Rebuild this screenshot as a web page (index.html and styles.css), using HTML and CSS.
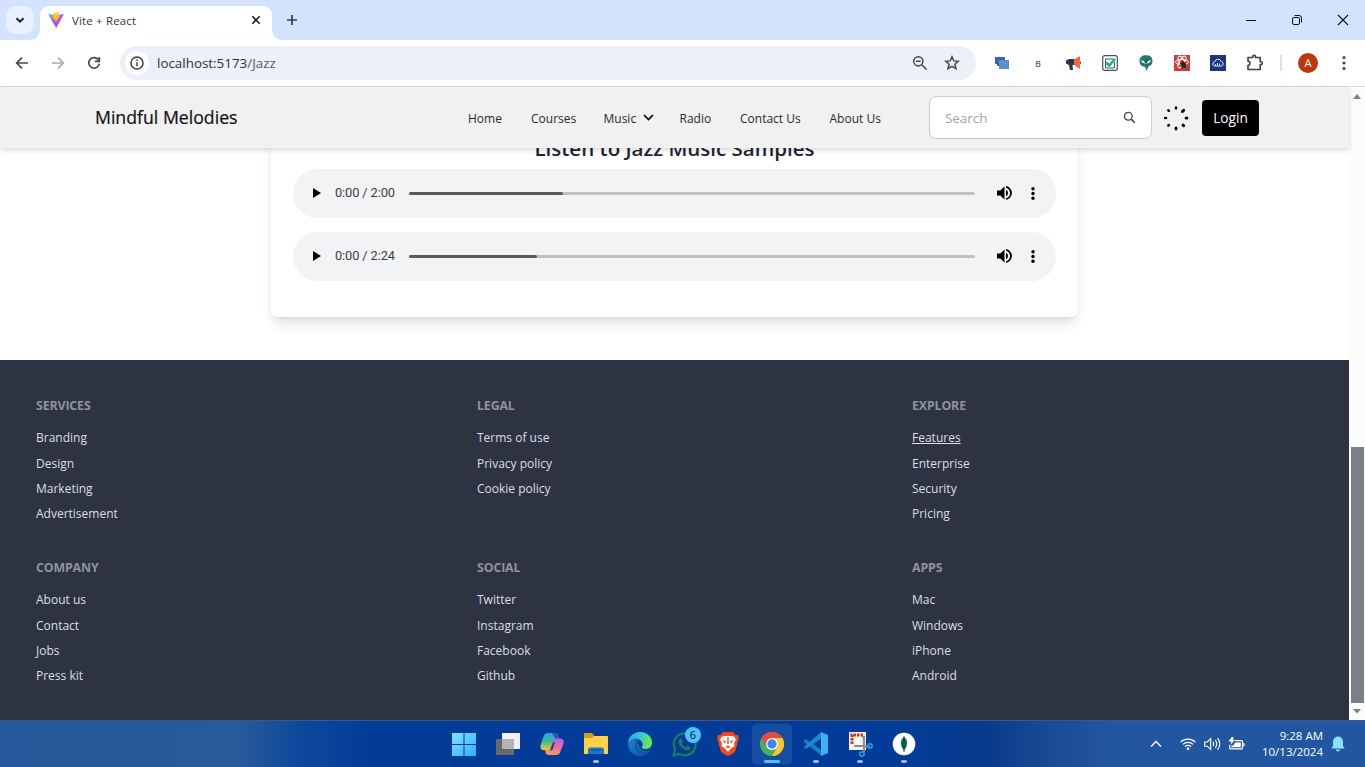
FILE: index.html
```html
<!DOCTYPE html>
<html lang="en">
<head>
<meta charset="utf-8">
<title>Vite + React</title>
<link rel="stylesheet" href="styles.css">
</head>
<body>
<header class="tabstrip">
  <button class="tab-search"><svg width="12" height="12" viewBox="0 0 12 12"><path d="M2.500 4.200 6 7.700l3.500-3.500" fill="none" stroke="#1f2023" stroke-width="2"/></svg></button>
  <div class="tab">
    <svg class="vite" width="16" height="16" viewBox="0 0 16 16"><defs><linearGradient id="v1" x1="0" y1="0" x2=".7" y2="1"><stop offset="0" stop-color="#41d1ff"/><stop offset=".5" stop-color="#a35cf0"/><stop offset="1" stop-color="#bd34fe"/></linearGradient><linearGradient id="v2" x1="0" y1="0" x2="0" y2="1"><stop offset="0" stop-color="#ffd23c"/><stop offset="1" stop-color="#ffa800"/></linearGradient></defs><path d="M0 2 8 3.300 16 2 8.200 16z" fill="url(#v1)"/><path d="m5.200 1.200 6-1.200-.6 3.500 1.400.3L8.200 10 5 6z" fill="url(#v2)"/></svg>
    <span class="tab-title">Vite + React</span>
    <svg width="10" height="10" viewBox="0 0 10 10"><path d="m1.300 1.300 7.400 7.400m0-7.400-7.400 7.400" stroke="#1f2023" stroke-width="1.600"/></svg>
  </div>
  <svg class="new-tab" width="12" height="12" viewBox="0 0 12 12"><path d="M6 1v10M1 6h10" stroke="#3c4043" stroke-width="1.700"/></svg>
  <div class="win-controls">
    <svg width="12" height="12" viewBox="0 0 12 12"><path d="M1 6.500h10" stroke="#111"/></svg>
    <svg width="12" height="12" viewBox="0 0 12 12" fill="none" stroke="#111"><rect x="1.500" y="3.500" width="7" height="7" rx="1.500"/><path d="M3.500 1.500h4.500a2.500 2.500 0 0 1 2.500 2.500v4.500"/></svg>
    <svg width="12" height="12" viewBox="0 0 12 12"><path d="m1 1 10 10M11 1 1 11" stroke="#111" stroke-width="1.100"/></svg>
  </div>
</header>
<div class="toolbar">
  <div class="nav-buttons">
    <svg width="16" height="16" viewBox="0 0 16 16" fill="none" stroke="#46484c" stroke-width="1.700"><path d="M14 8H3M8 2.700 2.700 8 8 13.300"/></svg>
    <svg width="16" height="16" viewBox="0 0 16 16" fill="none" stroke="#a9abae" stroke-width="1.700"><path d="M2 8h11M8 2.700 13.300 8 8 13.300"/></svg>
    <svg width="16" height="16" viewBox="0 0 16 16" fill="none" stroke="#46484c" stroke-width="1.700"><path d="M12.800 5.500A5.300 5.300 0 1 0 13.300 8.700"/><path d="M13.300 2v4.400H8.900"/></svg>
  </div>
  <div class="omnibox">
    <span class="site-info"><svg width="14" height="14" viewBox="0 0 14 14"><circle cx="7" cy="7" r="6" fill="none" stroke="#3c3e42" stroke-width="1.500"/><path d="M7 6.200v4M7 3.500v1.600" stroke="#3c3e42" stroke-width="1.500"/></svg></span>
    <span class="url">localhost:5173<span class="path">/Jazz</span></span>
    <svg class="zoom-icon" width="16" height="16" viewBox="0 0 16 16" fill="none" stroke="#46484c" stroke-width="1.500"><circle cx="6.300" cy="6.300" r="4.600"/><path d="m9.800 9.800 4.700 4.700M4 6.300h4.600"/></svg>
    <svg width="16" height="16" viewBox="0 0 16 16"><path d="m8 1.800 1.800 4.100 4.500.4-3.400 2.900 1.100 4.400L8 11.300l-4 2.300 1.100-4.400L1.700 6.300l4.500-.4z" fill="none" stroke="#46484c" stroke-width="1.500"/></svg>
  </div>
  <div class="extensions">
    <svg width="16" height="16" viewBox="0 0 16 16"><path d="M1 2h10v9H3V9H1z" fill="#3767a9"/><path d="M5 5h10v9H5z" fill="#5b8fd2"/></svg>
    <span class="ext-b">B</span>
    <svg width="16" height="16" viewBox="0 0 16 16"><path d="M0 5.500 3 4h5v6H6.500L7 15H4L3 10 0 8.500z" fill="#26374a"/><path d="M8 4.500 14 1v13l-6-4z" fill="#f4683e"/><path d="M14 6q2 1.500 0 3.500" fill="#26374a"/></svg>
    <svg width="16" height="16" viewBox="0 0 16 16"><rect x=".7" y=".7" width="14.600" height="14.600" rx="2" fill="#fff" stroke="#42545e" stroke-width="1.200"/><path d="M12 4H3.500v9h9V7" fill="none" stroke="#42545e"/><path d="m4 7.500 3.200 3L13 4" fill="none" stroke="#1fad83" stroke-width="2.600"/></svg>
    <svg width="16" height="16" viewBox="0 0 16 16"><path d="M8 .3c4 0 6.500 2 6.500 5.700 0 4-2.500 5-4 5.500L8.500 16 7 11.800C4 11.500 1.500 10 1.500 6 1.500 2.300 4 .3 8 .3z" fill="#23776f"/><path d="M3 5q5 2.500 10 0l-1 2.500q-4 1.800-8 0z" fill="#dff4ef"/><circle cx="8" cy="6.600" r="1.500" fill="#164c48"/></svg>
    <svg width="16" height="16" viewBox="0 0 16 16"><path d="M0 0h16v16H0z" fill="#cf3f38"/><g fill="none" stroke="#fff"><ellipse cx="8" cy="7" rx="6.500" ry="2.600"/><ellipse cx="8" cy="7" rx="2.600" ry="6.500" transform="rotate(30 8 7)"/><ellipse cx="8" cy="7" rx="2.600" ry="6.500" transform="rotate(-30 8 7)"/></g><ellipse cx="9.500" cy="10" rx="2.700" ry="3.500" fill="#372525" transform="rotate(-35 9.500 10)"/><path d="m6 8 7 6m-1-7-5 7" stroke="#372525"/></svg>
    <svg width="16" height="16" viewBox="0 0 16 16"><path d="M0 0h16v16H0z" fill="#1e3480"/><path d="M5 11a2 2 0 0 1-.5-4 3.600 3.600 0 0 1 6.800-.5A2.300 2.300 0 0 1 11.500 11z" fill="none" stroke="#dfe5ff"/><path d="M5.500 10.500V9m2 1.500V8m2 2.500V8.500" stroke="#dfe5ff"/></svg>
    <svg class="puzzle" width="18" height="18" viewBox="0 0 18 18"><path d="M2 3.500h4.700V2.800a1.400 1.400 0 0 1 2.800 0v.7h4.700v4.300h.7a1.400 1.400 0 0 1 0 2.800h-.7v4.900H2v-4.200a2 2 0 0 0 0-4z" fill="none" stroke="#3f4145" stroke-width="1.600" stroke-linejoin="round"/></svg>
  </div>
  <span class="divider"></span>
  <span class="avatar">A</span>
  <svg class="menu" width="4" height="16" viewBox="0 0 4 16" fill="#46484c"><circle cx="2" cy="2.500" r="1.600"/><circle cx="2" cy="8" r="1.600"/><circle cx="2" cy="13.500" r="1.600"/></svg>
</div>
<div class="viewport">
  <div class="page">
    <nav class="navbar">
      <a class="logo">Mindful Melodies</a>
      <ul class="links">
        <li class="l-home">Home</li>
        <li class="l-courses">Courses</li>
        <li class="l-music">Music <svg width="11" height="8" viewBox="0 0 11 8"><path d="m1 1 4.500 4.500L10 1" fill="none" stroke="#000" stroke-width="1.700"/></svg></li>
        <li class="l-radio">Radio</li>
        <li class="l-contact">Contact Us</li>
        <li>About Us</li>
      </ul>
      <label class="search">Search<svg width="13" height="13" viewBox="0 0 13 13"><circle cx="5.300" cy="5.300" r="3.900" fill="none" stroke="#444" stroke-width="1.300"/><path d="m8.100 8.100 3.700 3.700" stroke="#444" stroke-width="1.500"/></svg></label>
      <svg class="spinner" width="26" height="26" viewBox="-13 -13 26 26" fill="#000"><ellipse cy="-10" rx="1.300" ry="1.800"/><ellipse cy="-10" rx="1.500" ry="2.400" transform="rotate(45)"/><ellipse cy="-10.500" rx="1.500" ry="1.900" transform="rotate(90)"/><ellipse cy="-10.400" rx="1.500" ry="1.900" transform="rotate(135)"/><ellipse cy="-10.500" rx="1.500" ry="2" transform="rotate(180)"/><ellipse cy="-10.400" rx="1.400" ry="1.700" transform="rotate(225)"/><ellipse cy="-10.400" rx="1.300" ry="1.700" transform="rotate(270)"/><ellipse cy="-10.400" rx="1.300" ry="1.700" transform="rotate(315)"/></svg>
      <button class="login">Login</button>
    </nav>
    <main class="content">
      <section class="card">
        <h2>Listen to Jazz Music Samples</h2>
        <div class="player">
          <svg class="play" width="8" height="10" viewBox="0 0 8 10"><path d="M0 0v10l8-5z"/></svg>
          <span class="time">0:00 / 2:00</span>
          <span class="track"><span class="buffer" style="width:27.2%"></span></span>
          <svg class="volume" width="15" height="14" viewBox="0 0 15 14"><path d="M0 4.500v5h3.200L7.500 13.500V.5L3.200 4.500zM9 3.700v6.600a3.700 3.700 0 0 0 0-6.600zM9 0v1.700a5.500 5.500 0 0 1 0 10.600V14A7.100 7.100 0 0 0 9 0z"/></svg>
          <svg class="more" width="4" height="13" viewBox="0 0 4 13"><circle cx="2" cy="1.800" r="1.700"/><circle cx="2" cy="6.500" r="1.700"/><circle cx="2" cy="11.200" r="1.700"/></svg>
        </div>
        <div class="player">
          <svg class="play" width="8" height="10" viewBox="0 0 8 10"><path d="M0 0v10l8-5z"/></svg>
          <span class="time">0:00 / 2:24</span>
          <span class="track"><span class="buffer" style="width:22.6%"></span></span>
          <svg class="volume" width="15" height="14" viewBox="0 0 15 14"><path d="M0 4.500v5h3.200L7.500 13.500V.5L3.200 4.500zM9 3.700v6.600a3.700 3.700 0 0 0 0-6.600zM9 0v1.700a5.500 5.500 0 0 1 0 10.600V14A7.100 7.100 0 0 0 9 0z"/></svg>
          <svg class="more" width="4" height="13" viewBox="0 0 4 13"><circle cx="2" cy="1.800" r="1.700"/><circle cx="2" cy="6.500" r="1.700"/><circle cx="2" cy="11.200" r="1.700"/></svg>
        </div>
      </section>
    </main>
    <footer class="footer">
      <div class="group"><h6>SERVICES</h6><a>Branding</a><a>Design</a><a>Marketing</a><a>Advertisement</a></div>
      <div class="group"><h6>LEGAL</h6><a>Terms of use</a><a>Privacy policy</a><a>Cookie policy</a></div>
      <div class="group"><h6>EXPLORE</h6><a class="hover">Features</a><a>Enterprise</a><a>Security</a><a>Pricing</a></div>
      <div class="group"><h6>COMPANY</h6><a>About us</a><a>Contact</a><a>Jobs</a><a>Press kit</a></div>
      <div class="group"><h6>SOCIAL</h6><a>Twitter</a><a>Instagram</a><a>Facebook</a><a>Github</a></div>
      <div class="group"><h6>APPS</h6><a>Mac</a><a>Windows</a><a>iPhone</a><a>Android</a></div>
    </footer>
  </div>
  <div class="scrollbar">
    <svg width="8" height="5" viewBox="0 0 8 5"><path d="m0 5 4-5 4 5z" fill="#7d8187"/></svg>
    <span class="thumb"></span>
    <svg width="8" height="5" viewBox="0 0 8 5"><path d="m0 0 4 4.500L8 0z" fill="#7d8187"/></svg>
  </div>
</div>
<div class="taskbar">
  <div class="apps">
    <span class="app"><svg width="24" height="24" viewBox="0 0 24 24"><defs><linearGradient id="w" x1="0" y1="0" x2="1" y2="1"><stop offset="0" stop-color="#7fe3ff"/><stop offset="1" stop-color="#2cb2fa"/></linearGradient></defs><path d="M0 1h11.500v11H0zM12.500 1H24v11H12.500zM0 13h11.500v11H0zM12.500 13H24v11H12.500z" fill="url(#w)"/></svg></span>
    <span class="app"><svg width="24" height="24" viewBox="0 0 24 24"><path d="M6 1h18v16H6z" fill="#f1f1f1"/><path d="M0 7h18v16H0z" fill="#696969"/><path d="M6 7h12v10H6z" fill="#b5b5b5"/></svg></span>
    <span class="app"><svg width="24" height="24" viewBox="0 0 24 24"><defs><linearGradient id="c1" x1=".3" y1="0" x2=".3" y2="1"><stop offset="0" stop-color="#21a7ed"/><stop offset=".5" stop-color="#3cb995"/><stop offset="1" stop-color="#f4c92c"/></linearGradient><linearGradient id="c2" x1=".7" y1="0" x2=".4" y2="1"><stop offset="0" stop-color="#ae65ea"/><stop offset=".5" stop-color="#ef6c96"/><stop offset="1" stop-color="#ff9b4e"/></linearGradient></defs><path d="M8 1h7c2 0 3 1 3.500 3l.7 2.500h-3c-2 0-2.700 1-3.200 3l-1.500 5.500c-.5 2-1.500 3-3.500 3H4c-3 0-4-2-3.400-5L3.400 5C4.200 2 5.500 1 8 1z" fill="url(#c1)"/><path d="M12 1h3c2 0 3 1 3.500 3l.7 2.500h-4z" fill="#2355c4"/><path d="M16 23H9c-2 0-3-1-3.500-3L5 18h3c2 0 2.700-1 3.200-3l1.500-5.500c.5-2 1.500-3 3.500-3h4c3 0 4 2 3.400 5L20.600 19c-.8 3-2.100 4-4.600 4z" fill="url(#c2)"/><path d="M13.200 10.500 15 10l-2.600 8-2.200.500 1-3.500z" fill="#0a3f99"/></svg></span>
    <span class="app open"><svg width="24" height="24" viewBox="0 0 24 24"><path d="M0 2q0-1 1-1h7l2.500 3H23v4H0z" fill="#d99a16"/><path d="M0 6h8l2-2h13q1 0 1 1v17H0z" fill="#ffd04a"/><path d="M4 22v-4q0-2.500 2.500-2.500h11Q20 15.500 20 18v4z" fill="#187bc4"/><path d="M7 18h10" stroke="#0b5c9e" stroke-width="1.500"/></svg></span>
    <span class="app"><svg width="24" height="24" viewBox="0 0 24 24"><defs><linearGradient id="e1" x1="0" y1="0" x2="1" y2=".2"><stop offset="0" stop-color="#2aa7e4"/><stop offset=".55" stop-color="#35c9d6"/><stop offset="1" stop-color="#6be94c"/></linearGradient><linearGradient id="e2" x1="0" y1="0" x2="1" y2="1"><stop offset="0" stop-color="#1a8de0"/><stop offset="1" stop-color="#0c4f9b"/></linearGradient></defs><circle cx="12" cy="12" r="12" fill="url(#e2)"/><path d="M0 11C1 4 6 0 12 0c7 0 12 5 12 10.500 0 4-3 6.500-6.500 6.500-3 0-4.500-1-4-2 1-1 1.200-2 1-3C14 8.500 11 6.500 7.500 6.500 4 6.500 1 8.500 0 11z" fill="url(#e1)"/><path d="M9 7c-5 7 0 14 6 16.500 3-.5 5.500-2.500 7-4.500-5 2-12 1-12.500-5C9.500 11 10.500 9 12 8z" fill="#1458a5"/><path d="M13.500 15c1-1 1.200-2 1-3-.3-1.700-1.300-3-2.500-4-2 1-2.500 5 1 9 2 2 6 3 9 1l.7-2c-5 2-9.500 1-9.200-1z" fill="#08408f"/></svg></span>
    <span class="app"><svg width="25" height="25" viewBox="0 0 24 24"><path d="M1.500 22.500 3 17a10.500 10.500 0 1 1 4 4z" fill="none" stroke="#1d8058" stroke-width="2"/><path d="M7.500 6.500 9 6.300l1.300 3-1.200 1.500q1.500 3 4.300 4l1.500-1.600 3 1.500-.3 1.600q-1.500 2-4.300 1Q8.500 15.500 6.500 11 5.800 8 7.500 6.500z" fill="#1d8058"/></svg><span class="badge">6</span></span>
    <span class="app"><svg width="22" height="24" viewBox="0 0 22 24"><path d="m6 0h10l2.500 3 2-.3L22 6l-1 3-2.500 9.500q-1 2.500-7.500 5.500-6.500-3-7.500-5.500L1 9 0 6l1.500-3.300 2 .3z" fill="#f4481e"/><path d="M5 4.500 8.500 4h5l3.500.5 2 3-2 4 .5 2.500-3.500 2.500L11 20l-3-3.500L4.500 14 5 11.500l-2-4z" fill="#fff"/><path d="m5 8 4 1.500-1 2zM17 8l-4 1.500 1 2zM8.500 14.500 11 13.500l2.500 1-2.500 2zM10.300 5h1.400v7h-1.400z" fill="#f4481e"/></svg></span>
    <span class="app active"><svg width="24" height="24" viewBox="0 0 24 24"><circle cx="12" cy="12" r="12" fill="#34a853"/><path d="M1.600 6A12 12 0 0 1 22.400 6L12 7 6.800 15z" fill="#e33b2e"/><path d="M12 6h10.400A12 12 0 0 1 12 24l5.200-9z" fill="#fbc116"/><circle cx="12" cy="12" r="6" fill="#fff"/><circle cx="12" cy="12" r="4.700" fill="#2f78ee"/></svg></span>
    <span class="app open"><svg width="24" height="24" viewBox="0 0 24 24"><path d="M0 8.500 2 7l16 11.500V24L0 10z" fill="#1b7dc0"/><path d="m0 15 17-15 1 6L2 17z" fill="#168bd0"/><path d="m17 0 7 3v18l-7 3z" fill="#3fb0f2"/></svg></span>
    <span class="app open"><svg width="26" height="26" viewBox="0 0 26 26"><path d="M2 1h17v18H2z" fill="#f2f0ef"/><path d="M5 13V4h11" fill="none" stroke="#c8391a" stroke-width="3" stroke-dasharray="2.500 1"/><path d="M8 8h5v6H8z" fill="#fff"/><path d="M15 6h2v9l6 1M7 15h10v6" fill="none" stroke="#8a8c90" stroke-width="2"/><circle cx="23" cy="15" r="2.200" fill="none" stroke="#1d9ae4" stroke-width="1.700"/><circle cx="15" cy="23" r="2.200" fill="none" stroke="#1d9ae4" stroke-width="1.700"/></svg></span>
    <span class="app open"><svg width="24" height="24" viewBox="0 0 24 24"><circle cx="12" cy="12" r="11.300" fill="#fff"/><path d="M12 4q6.500 7.500 0 14.500-6.500-7 0-14.500z" fill="#136b49"/><path d="M12 5v15" stroke="#0a4b34"/></svg></span>
  </div>
  <div class="tray">
    <svg class="chevron" width="12" height="8" viewBox="0 0 12 8"><path d="M1 6.500 6 1.500l5 5" fill="none" stroke="#fff" stroke-width="1.500"/></svg>
    <svg class="wifi" width="16" height="14" viewBox="0 0 16 14" fill="none" stroke="#fff" stroke-width="1.200"><path d="M.6 5.200a10.300 10.300 0 0 1 14.800 0M2.900 7.400a7.200 7.200 0 0 1 10.200 0M5 9.600a4.200 4.200 0 0 1 6 0"/><circle cx="8" cy="11.700" r="1.300" fill="#fff" stroke="none"/></svg>
    <svg class="sound" width="17" height="14" viewBox="0 0 17 14" fill="none" stroke="#fff" stroke-width="1.100"><path d="M.7 5v4.200h2.600L6.700 12.500v-11L3.300 5zM9 4.800q1.500 2.200 0 4.400M11.300 3q2.800 4 0 8M13.500 1.200q4.500 5.800 0 11.600"/></svg>
    <svg class="battery" width="17" height="14" viewBox="0 0 17 14"><path d="M7 3.600h6.500q1 0 1 1v6.300q0 1-1 1H2.700q-1 0-1-1V8" fill="none" stroke="#fff" stroke-width="1.200"/><path d="M7 5.500h5.800v4.800H3.400V8.500h2zM15.200 6.200h1.300v3h-1.300zM3.700 0h1.800L5 2.800h2L2.500 8l.8-3.500H.5z" fill="#fff"/></svg>
    <div class="clock"><span>9:28 AM</span><span>10/13/2024</span></div>
    <svg class="bell" width="14" height="16" viewBox="0 0 14 16"><path d="M7 .5a5 5 0 0 1 5 5V10l1.700 2.500H.3L2 10V5.500a5 5 0 0 1 5-5zM4.700 13.500h4.600Q8.500 15.500 7 15.500t-2.300-2z" fill="#8be0fd"/></svg>
  </div>
</div>
</body>
</html>
```

FILE: styles.css
```css
* { box-sizing: border-box; }
body { margin: 0; width: 1365px; height: 767px; overflow: hidden; display: flex; flex-direction: column; background: #fff; font-family: "Open Sans", "Noto Sans", sans-serif; }
svg { flex: none; display: block; }
button { font: inherit; border: 0; padding: 0; }
h2, h6, ul { margin: 0; padding: 0; }
.tabstrip { height: 40px; flex: none; display: flex; align-items: center; background: #d3e2fd; padding-left: 6px; }
.tab-search { width: 28px; height: 28px; border-radius: 10px; background: #e9f0fe; display: flex; align-items: center; justify-content: center; }
.tab { align-self: flex-end; width: 232px; height: 34px; margin-left: 6px; padding: 0 11px 6px 8px; display: flex; align-items: center; gap: 8px; background: #fff; border-radius: 9px 9px 0 0; position: relative; }
.tab::before, .tab::after { content: ""; position: absolute; bottom: 0; width: 10px; height: 10px; }
.tab::before { left: -10px; background: radial-gradient(circle at 0 0, transparent 9.500px, #fff 10px); }
.tab::after { right: -10px; background: radial-gradient(circle at 100% 0, transparent 9.500px, #fff 10px); }
.tab-title { flex: 1; font-size: 11.400px; letter-spacing: .2px; color: #33353a; }
.new-tab { margin-left: 14px; }
.win-controls { margin-left: auto; display: flex; gap: 34px; padding-right: 16px; }
.toolbar { height: 47px; flex: none; display: flex; align-items: center; border-bottom: 1px solid #dcdcdc; background: #fff; }
.nav-buttons { display: flex; gap: 20px; margin-left: 14px; }
.omnibox { width: 856px; height: 34px; margin-left: 18px; border-radius: 17px; background: #ebf0f9; display: flex; align-items: center; padding: 0 16px 0 5px; }
.site-info { width: 24px; height: 24px; border-radius: 50%; background: #fff; display: flex; align-items: center; justify-content: center; }
.url { margin-left: 8px; flex: 1; font-size: 13.400px; color: #303236; }
.path { color: #55585f; }
.zoom-icon { margin-right: 16px; }
.extensions { display: flex; align-items: center; gap: 20px; margin-left: 18px; }
.ext-b { width: 16px; text-align: center; font: 600 9px "Open Sans", sans-serif; color: #6a60d0; }
.divider { width: 2px; height: 16px; background: #cfe2fb; margin-left: 16px; }
.avatar { width: 20px; height: 20px; border-radius: 50%; background: #bf360c; color: #fff; font-size: 11px; line-height: 20px; text-align: center; margin-left: 16px; }
.menu { margin-left: 24px; }
.viewport { flex: 1; display: flex; min-height: 0; }
.page { width: 1349px; display: flex; flex-direction: column; }
.navbar { height: 61px; flex: none; position: relative; z-index: 1; display: flex; align-items: center; background: #f1f1f1; box-shadow: 0 2px 5px rgba(0, 0, 0, .16); padding-left: 95px; color: #2a2a2a; }
.logo { width: 373px; padding-bottom: 2px; font-size: 17.700px; font-weight: 500; -webkit-text-stroke: .2px #111; color: #111; }
.links { width: 461px; display: flex; list-style: none; font-size: 12px; padding-top: 2px; }
.links li { white-space: nowrap; }
.l-home { width: 63px; }
.l-courses { width: 72.500px; }
.l-music { width: 76px; display: flex; align-items: center; gap: 7px; }
.l-music svg { margin-top: -2px; }
.l-radio { width: 60.500px; }
.l-contact { width: 89.500px; }
.search { width: 223px; height: 43px; border: 1px solid #ccc; border-radius: 7px; background: #fff; display: flex; align-items: center; justify-content: space-between; padding: 0 15px; font-size: 13.400px; color: #9ca3af; }
.spinner { margin-left: 11px; }
.login { width: 57px; height: 36px; margin-left: 13px; border-radius: 4px; background: #000; color: #fff; font-size: 13.700px; }
.content { height: 212px; flex: none; overflow: hidden; display: flex; justify-content: center; align-items: flex-start; }
.card { width: 807px; height: 189px; margin-top: -20px; padding: 6px 22px 0; border-radius: 7px; background: #fff; box-shadow: 0 9px 14px -3px rgba(0, 0, 0, .12), 0 3px 6px -3px rgba(0, 0, 0, .1); display: flex; flex-direction: column; }
.card h2 { height: 35px; line-height: 28px; text-align: center; font-size: 20.500px; font-weight: 600; color: #1f2533; white-space: nowrap; }
.player { height: 49px; flex: none; margin-bottom: 14px; border-radius: 25px; background: #f1f3f4; display: flex; align-items: center; padding: 0 21px 0 20px; }
.play, .volume, .more { margin-top: -1px; }
.time { width: 74px; margin: -2px 0 0 14px; font: 12.800px Roboto, sans-serif; letter-spacing: -.1px; color: #3c3c3c; white-space: nowrap; }
.track { flex: 1; height: 3px; border-radius: 2px; background: #bfc0c1; display: flex; }
.buffer { height: 3px; border-radius: 2px; background: #58595b; }
.volume { margin-left: 22px; margin-right: 19px; }
.footer { flex: 1; background: #2d3340; padding: 37px 36px 0; display: grid; grid-template-columns: 441px 435px auto; grid-template-rows: auto auto; row-gap: 36px; align-content: start; font-size: 12px; line-height: 18px; color: #dcdfe4; }
.group { display: flex; flex-direction: column; align-items: flex-start; gap: 7.200px; }
.group h6 { font-size: 12.400px; font-weight: 700; color: #8f949c; letter-spacing: -.15px; margin-bottom: 7.200px; }
.hover { text-decoration: underline; }
.scrollbar { flex: 1; display: flex; flex-direction: column; align-items: center; padding: 7px 0 6px; background: #fcfcfc; }
.thumb { width: 13px; height: 256px; margin: auto 0 6px 1px; background: #7b7f86; }
.taskbar { height: 47px; flex: none; display: flex; border-top: 1px solid #38588f; background: linear-gradient(90deg, #25589a 0, #28599a 240px, #0d489d 300px, #033c98 370px, #033c98 900px, #083a8b 985px, #1a4b95 1050px, #2356a0 1110px, #2356a0 100%); }
.apps { display: flex; align-items: center; margin-left: 442px; }
.app { width: 44px; height: 46px; display: flex; align-items: center; justify-content: center; position: relative; }
.open::after, .active::after { content: ""; position: absolute; bottom: 4px; left: 19px; width: 6px; height: 3px; border-radius: 2px; background: #9db6dc; }
.active::before { content: ""; position: absolute; left: 2px; top: 3px; width: 40px; height: 40px; border-radius: 4px; background: rgba(255, 255, 255, .09); }
.active::after { left: 14px; width: 16px; background: #4cc2ff; }
.badge { position: absolute; left: 23px; top: 6px; width: 16px; height: 16px; border-radius: 50%; background: #4cc2ff; color: #111; font-size: 11px; line-height: 16px; text-align: center; }
.tray { margin-left: auto; display: flex; align-items: center; color: #fff; padding-right: 20px; }
.chevron { margin-right: 18px; }
.wifi { margin-right: 8px; }
.sound { margin-right: 7px; }
.battery { margin-right: 8px; }
.clock { width: 70px; display: flex; flex-direction: column; align-items: flex-end; font-size: 11.500px; line-height: 16px; }
.bell { margin-left: 8px; }
```
